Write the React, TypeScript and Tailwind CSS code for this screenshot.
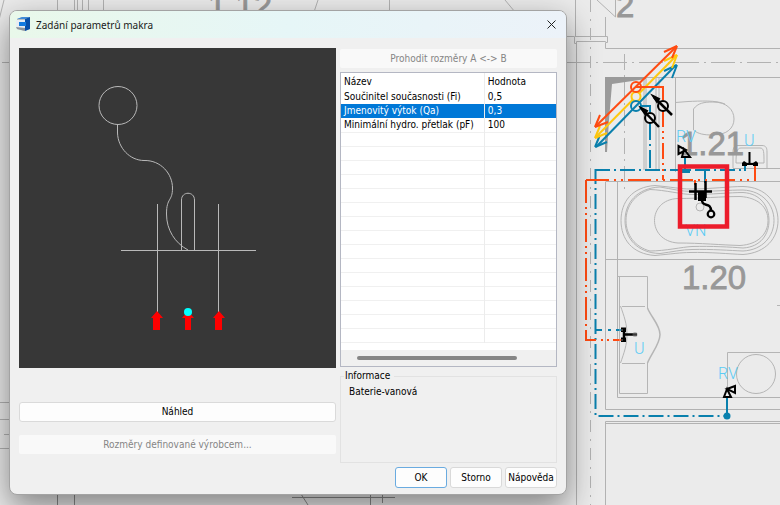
import { useState } from 'react';
import type { ReactNode } from 'react';

interface Parameter {
  name: string;
  value: string;
}

const parameters: Parameter[] = [
  { name: 'Součinitel současnosti (Fi)', value: '0,5' },
  { name: 'Jmenovitý výtok (Qa)', value: '0,3' },
  { name: 'Minimální hydro. přetlak (pF)', value: '100' },
];

const emptyRows = Array.from({ length: 15 }, (_, i) => i);

function FloorPlan() {
  return (
    <svg
      className="absolute inset-0 h-full w-full"
      viewBox="0 0 780 505"
      preserveAspectRatio="xMinYMin slice"
      fill="none"
      aria-hidden="true"
    >
      {/* Walls */}
      <g stroke="#b2b2b2" strokeWidth="1">
        <path d="M4 0L-1 20M57.5 0V12M74.5 0V12M77.5 0V12M82.5 0V12M88.5 0V12M103.5 0V12M318 0L314 12M389.5 0V12M505 0L515 12" />
        <path d="M2 62.5H10M0 402.5H10M0 419.5H10M4 434.5H10M0 448.5H10" />
        <path d="M57.5 494V505M74.5 494V505M292 497.5H395M301 494L308 505M370.5 494V505M382.5 494V503" stroke="#8c8c8c" />
        <path d="M575.5 0V36M576.5 43V505M605.5 17V36M605.5 43V48.5H780M567 36.5H574" />
        <path d="M574.5 36.5H607.5V42.5H605.5V41.5H576.5V43.5H574.5Z" />
        <path d="M597 0L615.5 17V0" />
        <path d="M605.5 77.5H780M644 78V170M646 78V170M656 78V170M659 78V170M675.5 78V172M605.5 181.5H780M733 168.5H780" />
        <path d="M605.5 182V409.5H780M617.5 182V397.5H780M605.5 259.5H780M605.5 505V421.5H780M606 423.5H780" />
        <path d="M567 62.5H780" strokeDasharray="24 5 2 5" />
        <path d="M590.5 0V505" strokeDasharray="12 7 2 7" />
        <path d="M624.5 54V192" strokeDasharray="16 5 2 5" />
      </g>
      <path d="M605 77H646V79L612 84L609 120L607 152H605Z" fill="#9a9a9a" />

      {/* Sanitary ware */}
      <g stroke="#b5b5b5" strokeWidth="1">
        <path d="M675.5 102.5L688 101.5C700 101 716 100 725 104" />
        <path d="M693.5 109C698 103 704 102 713 102C727 102 734 110 734 119C734 128 727 135 713 135C704 135 698 134 693.5 130Z" />
        <path d="M733 168V152C733 147 735 145.5 738 145.5H762C766 145.5 767 148 767 152V168M736 163C736 152 737 148 741 148H760C764 148 764 152 764 163Z" />
        <path d="M655 185.5C671 187 681 189 690 189C710 189 730 186.5 743 186.5C766 187 778 203 778 220.5C778 238 766 253 743 254.5C730 254 710 252 690 252.5C681 252.5 671 254 655 255.5C632 254 621 239 621 220.5C621 202 632 187 655 185.5Z" />
        <path d="M660 187C672 189 682 191.5 692 191.5C712 191.5 730 190 743 190C763 191 774 205 774 220.5C774 236 763 250 743 251C730 250.5 712 249 692 249.5C682 249.5 672 252 660 253.5C637 253 625 238 625 220.5C625 203 637 188 660 187Z" />
        <path d="M650 189.5C665 190 682 194.5 692 194.5C712 194.5 730 192.5 743 192.5C761 193.5 769 207 769 220.5C769 234 761 247 743 248C730 247 712 246 692 246.5C682 247 665 251 650 251C635 247 626 235 626 220.5C626 206 635 194 650 189.5Z" />
        <path d="M678 198.5C700 198.5 722 196.5 740 196.5C758 197.5 768 207 768 220.5C768 234 758 244.5 740 245.5C722 245 700 243 678 243C662 242 654.5 231 654.5 220.5C654.5 210 662 199 678 198.5Z" />
        <circle cx="700" cy="207" r="4" />
        <path d="M617.5 276.5H647.5V308M647.5 363V393.5H619.5V276.5M622 306.5H645M622 363.5H645M620.5 306C624 316 627 324 627 334.5C627 345 624 353 620.5 363" />
        <path d="M647.5 308C651 317 660 325 660 334.5C660 344 651 354 647.5 363" strokeWidth="1.5" />
        <path d="M777 305.5H780M727.5 392V352.5H780" />
        <circle cx="756" cy="374" r="19.5" />
      </g>

      {/* Room numbers */}
      <g
        fill="#989898"
        stroke="#989898"
        strokeWidth="0.8"
        fontSize="33"
        fontFamily="'Liberation Sans', Arial, sans-serif"
      >
        <text x="208" y="17">1.12</text>
        <text x="616" y="17">2</text>
        <text x="680" y="155">1.21</text>
        <text x="682" y="289">1.20</text>
      </g>
      <g fill="#5ccbf5" fontSize="16" fontWeight="300" fontFamily="Roboto, sans-serif">
        <text x="676" y="142">RV</text>
        <text x="744" y="146">U</text>
        <text x="685" y="236">VN</text>
        <text x="634" y="354">U</text>
        <text x="718" y="379">RV</text>
      </g>

      {/* Cold water, circulation and hot water pipes */}
      <g stroke="#0a80ad" strokeWidth="2">
        <path d="M595 170H745" strokeDasharray="15 4 2 4" />
        <path d="M595.5 169V416H727" strokeDasharray="15 4 2 4" />
        <path d="M650 122V170" strokeDasharray="18 4 2 4" />
        <path d="M641 106H650V112M595 330H602M608 330H611M616 330H624M685 157V171M705 170V183M727 397V416M745 171V164" />
        <path d="M681 171H690" strokeWidth="4" />
        <path d="M596 147L676 65" />
        <path d="M595 147L607 142M595 147L600 135M677 65L672 78M677 65L664 71" />
      </g>
      <circle cx="727" cy="416" r="3.5" fill="#0a80ad" />
      <g stroke="#ffc80f" strokeWidth="2">
        <path d="M595 138L677 55" />
        <path d="M595 138L607 133M595 138L600 126M677 55L672 68M677 55L664 61" />
        <circle cx="636" cy="96.5" r="4.5" fill="#ebebeb" />
      </g>
      <circle cx="636" cy="106" r="5" stroke="#0a80ad" strokeWidth="2" />
      <g stroke="#ff4b12" strokeWidth="2">
        <path d="M595 127L677 46" />
        <path d="M595 127L608 122M595 127L600 115M677 46L672 58M677 46L664 52" />
        <path d="M636 87H663V100" />
        <path d="M663 111V180" strokeDasharray="16 4 2 4 2 4" />
        <path d="M586 180H755" strokeDasharray="23 5 2 5 2 5" />
        <path d="M586 180V340" strokeDasharray="23 4 2 4 2 4" />
        <path d="M586 330V340H596M601 340H603M607 340H609M613 340H624M755 181V164M695 180V185" />
        <circle cx="636" cy="87" r="5" />
      </g>

      {/* Valves and fixtures */}
      <g stroke="#000" strokeWidth="2">
        <circle cx="663" cy="106" r="5" />
        <path d="M654 97L672 115" strokeWidth="2.5" />
        <path d="M653 96L659 99L657 102Z" fill="#000" />
        <circle cx="650" cy="118" r="5" />
        <path d="M641 108L659 127" strokeWidth="2.5" />
        <path d="M641 108L647 111L645 114Z" fill="#000" />
        <path d="M678.5 146V154L686 150ZM684 149L690 157H682Z" />
        <path d="M727 389L724 397H731ZM727 389L735 386V393Z" />
        <path d="M749.5 152V164M743 164H757" />
        <path d="M742 166V163L744 161L747 163V166ZM753 166V163L756 161L758 163V166Z" fill="#000" stroke="none" />
        <path d="M695.5 183V200M705.5 181V198M689 191.5H712" strokeWidth="2.5" />
        <path d="M698 191H706V201H698Z" fill="#000" stroke="none" />
        <path d="M702 200C702 208 711 201 711 211" strokeWidth="2.5" />
        <circle cx="711" cy="214" r="3.3" strokeWidth="2.2" />
        <path d="M624 329V340M624 334.5H637" strokeWidth="2.5" />
        <path d="M621 327.5H626V332H621ZM621 337.5H626V342H621Z" fill="#000" stroke="none" />
      </g>
      <path d="M619 330H623M619 340H623" stroke="#fff" strokeWidth="0.5" />
      <circle cx="635" cy="334.5" r="2.5" fill="#777" fillOpacity="0.5" />
      <rect x="680" y="166.5" width="47" height="60" stroke="#ec1c2b" strokeWidth="4.5" />
    </svg>
  );
}

function MacroPreview() {
  return (
    <svg className="block h-[320px] w-full bg-[#373737]" viewBox="19 48 317 320" fill="none" role="img" aria-label="Náhled">
      <g stroke="#b9b9b9">
        <circle cx="118" cy="105.5" r="19" />
        <path d="M117.5 124.5V133C118 148 130 160.5 144 160.5C161 160 172.5 174 172.5 188C172.5 202 166.5 197 166.5 214C166.5 230 175 243 188 250" />
        <path d="M181.5 250V200C181.5 191 194.5 191 194.5 200V250" />
        <path d="M157.5 204V312M218.5 204V312M121 250.5H256" />
      </g>
      <g fill="#ff0000">
        <path d="M157 311L163 318H160V330H153V318H151Z" />
        <path d="M188 311L194 318H191V330H185V318H182Z" />
        <path d="M219 311L225 318H222V330H215V318H213Z" />
      </g>
      <circle cx="188" cy="312" r="4" fill="#00ffff" />
    </svg>
  );
}

function AppIcon() {
  return (
    <svg className="h-[15px] w-[15px]" viewBox="0 0 15 15" aria-hidden="true">
      <path d="M1 2L6 0H14V12L9 14L1 12Z" fill="#b4bdc7" />
      <path d="M1 2L6 0H14L9 2Z" fill="#3f8ad8" />
      <path d="M9 2L14 0V12L9 14Z" fill="#0a50a8" />
      <path d="M0 3L9 3V6H3V9H9V13L1 12L0 9Z" fill="#e9edf1" />
      <path d="M3 5H10V9H3Z" fill="#147be0" />
      <path d="M0 10L9 11V14L1 12Z" fill="#8e959c" />
    </svg>
  );
}

interface DialogButtonProps {
  children: ReactNode;
  primary?: boolean;
}

function DialogButton({ children, primary }: DialogButtonProps) {
  return (
    <button
      type="button"
      className={`h-[21px] w-[52px] rounded-[3px] border bg-[#fdfdfd] ${
        primary ? 'border-[#6aabe0]' : 'border-[#d9d9d9]'
      }`}
    >
      {children}
    </button>
  );
}

export default function App() {
  const [selected, setSelected] = useState(1);

  return (
    <main className="relative min-h-screen overflow-hidden bg-[#ebebeb] px-[9px] py-[10px] font-['DejaVu_Sans_Condensed','DejaVu_Sans',sans-serif] text-[10px] leading-[14px] text-black">
      <FloorPlan />

      <section
        role="dialog"
        aria-labelledby="dialog-title"
        className="relative w-full max-w-[558px] overflow-hidden rounded-lg border border-[#a3a3a3] bg-[#f0f0f0] shadow-[0_12px_32px_rgba(0,0,0,0.45)]"
      >
        <header className="flex h-[27px] items-center gap-[5px] bg-linear-to-r from-[#e9f8ea] via-[#e6f6f7] to-[#ecf2f9] pr-[9px] pl-[6px]">
          <AppIcon />
          <h1 id="dialog-title" className="flex-1 font-['Noto_Sans',sans-serif] text-[#1a1a1a]">
            Zadání parametrů makra
          </h1>
          <button type="button" aria-label="Zavřít" className="p-px">
            <svg className="h-[9px] w-[9px]" viewBox="0 0 9 9" stroke="#222" aria-hidden="true">
              <path d="M0.5 0.5L8.5 8.5M8.5 0.5L0.5 8.5" />
            </svg>
          </button>
        </header>

        <div className="px-[9px] pt-[10px] pb-[6px]">
          <div className="grid grid-cols-[317fr_217fr] gap-1">
            <div className="flex flex-col">
              <MacroPreview />
              <button type="button" className="mt-[34px] h-5 rounded-[3px] border border-[#dadada] bg-[#fdfdfd]">
                Náhled
              </button>
              <button type="button" disabled className="mt-[13px] h-[19px] rounded-[2px] bg-[#f9f9f9] text-[#858585]">
                Rozměry definované výrobcem...
              </button>
            </div>

            <div className="flex flex-col pt-px">
              <button type="button" disabled className="h-[19px] rounded-[2px] bg-[#f9f9f9] text-[#858585]">
                Prohodit rozměry A &lt;-&gt; B
              </button>

              <div className="mt-1 h-[295px] border border-[#b4b7c3] bg-white">
                <div className="h-[277px] overflow-hidden">
                  <table className="w-full table-fixed border-collapse text-left">
                    <thead>
                      <tr className="h-[17px]">
                        <th scope="col" className="w-2/3 border-r border-[#ececec] p-0 pl-[3px] font-normal">Název</th>
                        <th scope="col" className="p-0 pl-[3px] font-normal">Hodnota</th>
                      </tr>
                    </thead>
                    <tbody>
                      {parameters.map((parameter, i) => (
                        <tr
                          key={parameter.name}
                          onClick={() => setSelected(i)}
                          className={i === selected ? 'bg-[#0078d7] text-white' : undefined}
                        >
                          <td className="border-r border-[#ececec] p-0 pl-[3px]">{parameter.name}</td>
                          <td className="p-0 pl-[3px]">{parameter.value}</td>
                        </tr>
                      ))}
                      {emptyRows.map((row) => (
                        <tr key={row} className="h-[14px] border-y border-[#f0f0f0]">
                          <td className="border-r border-[#ececec] p-0" />
                          <td className="p-0" />
                        </tr>
                      ))}
                    </tbody>
                  </table>
                </div>
                <div className="h-4 bg-[#f0f0f0] px-4 py-[6px]">
                  <div className="h-1 w-[160px] rounded-full bg-[#868686]" />
                </div>
              </div>

              <fieldset className="mt-[3px] h-[93px] border border-[#e2e2e2] px-2">
                <legend className="-ml-[5px] pr-1 pl-px leading-3">Informace</legend>
                <p className="mt-[3px]">Baterie-vanová</p>
              </fieldset>
            </div>
          </div>

          <footer className="mt-1 flex justify-end gap-[3px]">
            <DialogButton primary>OK</DialogButton>
            <DialogButton>Storno</DialogButton>
            <DialogButton>Nápověda</DialogButton>
          </footer>
        </div>
      </section>
    </main>
  );
}
